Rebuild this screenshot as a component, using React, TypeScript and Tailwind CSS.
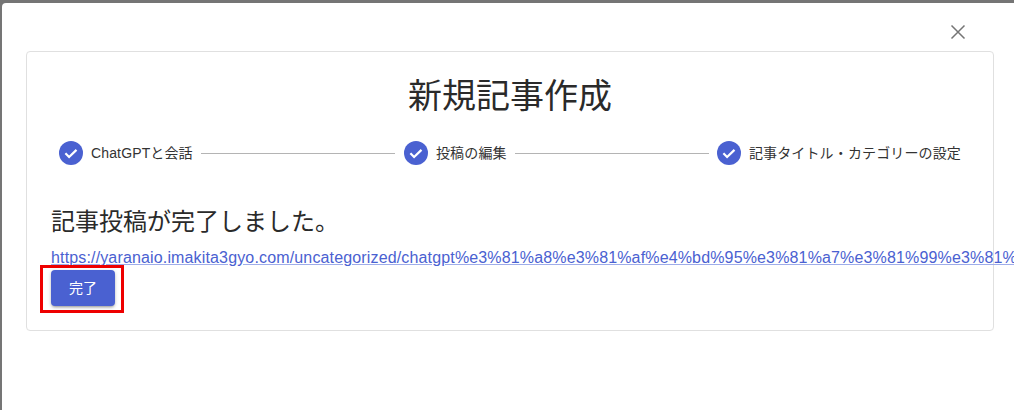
const FONT = "font-['Liberation_Sans','Noto_Sans_CJK_JP',sans-serif]";

function StepIcon() {
  return (
    <svg width="24" height="24" viewBox="0 0 24 24" className="shrink-0">
      <circle cx="12" cy="12" r="12" fill="#4a61d1" />
      <path d="M6.4 12.3l3.7 3.7 7.4-7.1" fill="none" stroke="#fff" strokeWidth="2.2" />
    </svg>
  );
}

function Step({ label }: { label: string }) {
  return (
    <div className="flex shrink-0 items-center gap-2">
      <StepIcon />
      <span className="text-[14px] leading-6 tracking-[0.01em] text-[#333333]">{label}</span>
    </div>
  );
}

function Connector() {
  return <div className="mx-2 h-px flex-1 bg-[#b4b4b4]" />;
}

export default function App() {
  const url =
    "https://yaranaio.imakita3gyo.com/uncategorized/chatgpt%e3%81%a8%e3%81%af%e4%bd%95%e3%81%a7%e3%81%99%e3%81%8b/";
  return (
    <div className={`${FONT} h-[410px] w-[1014px] overflow-hidden bg-[#757575] pl-[2px] pt-[3px]`}>
      <div className="h-[407px] w-[1012px] rounded-tl-[4px] bg-white">
        <div className="flex h-[48px] justify-end pr-[48px] pt-[20px]">
          <svg width="16" height="16" viewBox="0 0 16 16" className="mt-[1px]">
            <path d="M1.5 1.5l13 13M14.5 1.5l-13 13" stroke="#757575" strokeWidth="1.5" fill="none" />
          </svg>
        </div>
        <div className="ml-[24px] h-[280px] w-[968px] rounded-[4px] border border-[#e0e0e0] bg-white">
          <h1 className="pt-[20px] text-center text-[34px] leading-[48px] text-[#2a2a2a]">新規記事作成</h1>
          <div className="mt-[21px] flex items-center px-[32px]">
            <Step label="ChatGPTと会話" />
            <Connector />
            <div className="ml-[1px]">
              <Step label="投稿の編集" />
            </div>
            <Connector />
            <Step label="記事タイトル・カテゴリーの設定" />
          </div>
          <div className="mt-[41px] pl-[24px]">
            <p className="text-[24px] leading-[32px] text-[#2a2a2a]">記事投稿が完了しました。</p>
            <a
              href="#"
              className="mt-[10px] block whitespace-nowrap text-[16px] leading-[20px] tracking-[0.15px] text-[#4a61d1] underline decoration-[#9fadea]"
            >
              {url}
            </a>
            <div className="relative mt-[2px] w-fit">
              <button className="block h-[36px] w-[64px] rounded-[4px] bg-[#4a61d1] text-[14px] text-white shadow-[0_2px_3px_-1px_rgba(0,0,0,0.35),0_1px_4px_rgba(0,0,0,0.15)]">
                完了
              </button>
              <div className="absolute -bottom-[7px] -left-[11px] -right-[9px] -top-[5px] border-[3px] border-[#ee0000]" />
            </div>
          </div>
        </div>
      </div>
    </div>
  );
}
